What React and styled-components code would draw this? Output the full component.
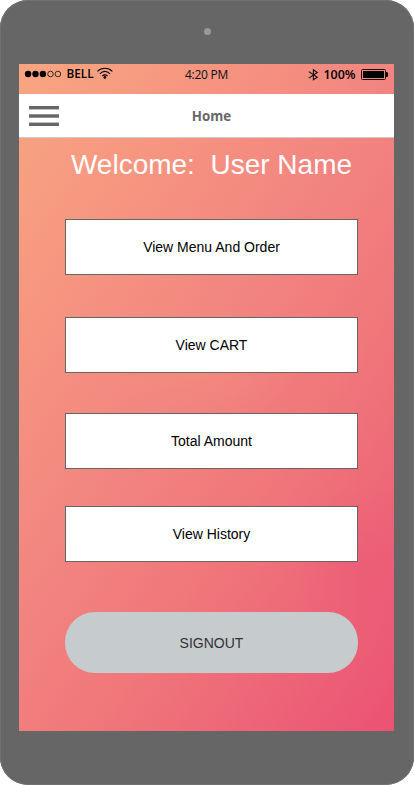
import React from "react";
import styled, { createGlobalStyle } from "styled-components";

const GlobalStyle = createGlobalStyle`
  * { box-sizing: border-box; }
  body { margin: 0; background: #fff; font-family: "Liberation Sans", Arial, sans-serif; }
`;

const Phone = styled.div`
  width: 414px;
  height: 785px;
  padding: 0 20px 0 19px;
  border-radius: 28px;
  background: #666;
  box-shadow: inset 0 0 0 1px #727272;
  display: flex;
  flex-direction: column;
`;

const Bezel = styled.div`
  height: 64px;
  flex: none;
  display: flex;
  justify-content: center;
  padding: 28px 0 0 1px;
`;

const Camera = styled.div`
  width: 7px;
  height: 7px;
  border-radius: 50%;
  background: #999;
`;

const Screen = styled.div`
  height: 667px;
  background:
    radial-gradient(ellipse 75px 85px at 93% 75%, rgba(236, 82, 116, 0.35), rgba(236, 82, 116, 0) 100%),
    radial-gradient(ellipse 95px 60px at 49% 45%, rgba(245, 150, 125, 0.35), rgba(245, 150, 125, 0) 100%),
    linear-gradient(125deg, #f8a682 0%, #f69580 23%, #f28480 46%, #f0777a 64%, #ed6678 81%, #eb5273 100%);
  display: flex;
  flex-direction: column;
`;

const StatusBar = styled.div`
  height: 30px;
  flex: none;
  display: grid;
  grid-template-columns: 1fr auto 1fr;
  padding: 0 5px;
`;

const StatusIcons = styled.svg`
  width: 90px;
  height: 20px;
  display: block;
  justify-self: ${(p) => p.$side};
  font: 600 12px "Open Sans", "Noto Sans", sans-serif;
`;

const Clock = styled.span`
  font: 12px/22px "Open Sans", "Noto Sans", sans-serif;
  letter-spacing: -0.25px;
  color: #111;
`;

const Header = styled.header`
  height: 44px;
  flex: none;
  padding: 0 10px;
  background: #fff;
  border-bottom: 1px solid #ccc;
  display: grid;
  grid-template-columns: 30px 1fr 20px;
  align-items: center;
`;

const MenuButton = styled.button`
  width: 30px;
  height: 20px;
  padding: 0;
  border: 0;
  background: none;
  color: #666;
  svg { display: block; }
`;

const Title = styled.h1`
  margin: 0;
  text-align: center;
  font: bold 13.3px/16px "Open Sans", "Noto Sans", sans-serif;
  color: #666;
`;

const Content = styled.main`
  padding: 11px 36px 0 46px;
  display: flex;
  flex-direction: column;
`;

const Welcome = styled.h2`
  margin: 0 0 38px;
  font-size: 28px;
  font-weight: 400;
  line-height: 32px;
  text-align: center;
  white-space: pre;
  color: #fff;
`;

const ActionButton = styled.button`
  height: 56px;
  margin: 0 0 ${(p) => p.$gap}px;
  padding: 0;
  border: 1px solid #666;
  background: #fff;
  color: #000;
  font: 14px/16px "Liberation Sans", Arial, sans-serif;
`;

const SignOutButton = styled(ActionButton)`
  height: 61px;
  border: 0;
  border-radius: 30px;
  background: #c6cbce;
  color: #333;
`;

const actions = [
  { label: "View Menu And Order", gap: 42 },
  { label: "View CART", gap: 40 },
  { label: "Total Amount", gap: 37 },
  { label: "View History", gap: 50 },
];

function CarrierStatus() {
  return (
    <StatusIcons viewBox="0 0 90 20" $side="start">
      <circle cx="4.1" cy="10" r="3.2" />
      <circle cx="11.5" cy="10" r="3.2" />
      <circle cx="18.9" cy="10" r="3.2" />
      <circle cx="26.5" cy="10" r="2.8" fill="none" stroke="#000" strokeWidth="0.75" />
      <circle cx="33.9" cy="10" r="2.8" fill="none" stroke="#000" strokeWidth="0.75" />
      <text x="42.6" y="14.2" textLength="27" lengthAdjust="spacingAndGlyphs">BELL</text>
      <g fill="none" stroke="#000" strokeWidth="1.1">
        <path d="M73.4 7.4C77.8 3.2 84 3.2 88.4 7.4" />
        <path d="M75.8 9.8C79 6.8 82.8 6.8 86 9.8" />
        <path d="M78.2 12.1C80 10.5 81.8 10.5 83.6 12.1" />
      </g>
      <circle cx="80.9" cy="13.4" r="1.4" />
    </StatusIcons>
  );
}

function BatteryStatus() {
  return (
    <StatusIcons viewBox="0 0 90 20" $side="end">
      <path d="M9.8 7.6L18.3 13.3L14.4 15.8V5.9L18.3 8.5L9.8 14.1" fill="none" stroke="#111" strokeWidth="1.1" />
      <text x="24.5" y="15" textLength="32" lengthAdjust="spacingAndGlyphs">100%</text>
      <rect x="62.5" y="5.5" width="24" height="10" rx="1" fill="none" stroke="#111" />
      <rect x="64" y="7" width="21" height="7" />
      <path d="M87 8h1.2l.9 1v3l-.9 1H87z" />
    </StatusIcons>
  );
}

export default function App() {
  return (
    <>
      <GlobalStyle />
      <Phone>
        <Bezel><Camera /></Bezel>
        <Screen>
          <StatusBar>
            <CarrierStatus />
            <Clock>4:20 PM</Clock>
            <BatteryStatus />
          </StatusBar>
          <Header>
            <MenuButton aria-label="Menu">
              <svg width="30" height="20" viewBox="0 0 30 20" fill="currentColor">
                <rect width="30" height="3.4" />
                <rect y="8.3" width="30" height="3.4" />
                <rect y="16.6" width="30" height="3.4" />
              </svg>
            </MenuButton>
            <Title>Home</Title>
          </Header>
          <Content>
            <Welcome>{"Welcome:  User Name"}</Welcome>
            {actions.map((a) => (
              <ActionButton key={a.label} $gap={a.gap}>{a.label}</ActionButton>
            ))}
            <SignOutButton $gap={0}>SIGNOUT</SignOutButton>
          </Content>
        </Screen>
      </Phone>
    </>
  );
}
